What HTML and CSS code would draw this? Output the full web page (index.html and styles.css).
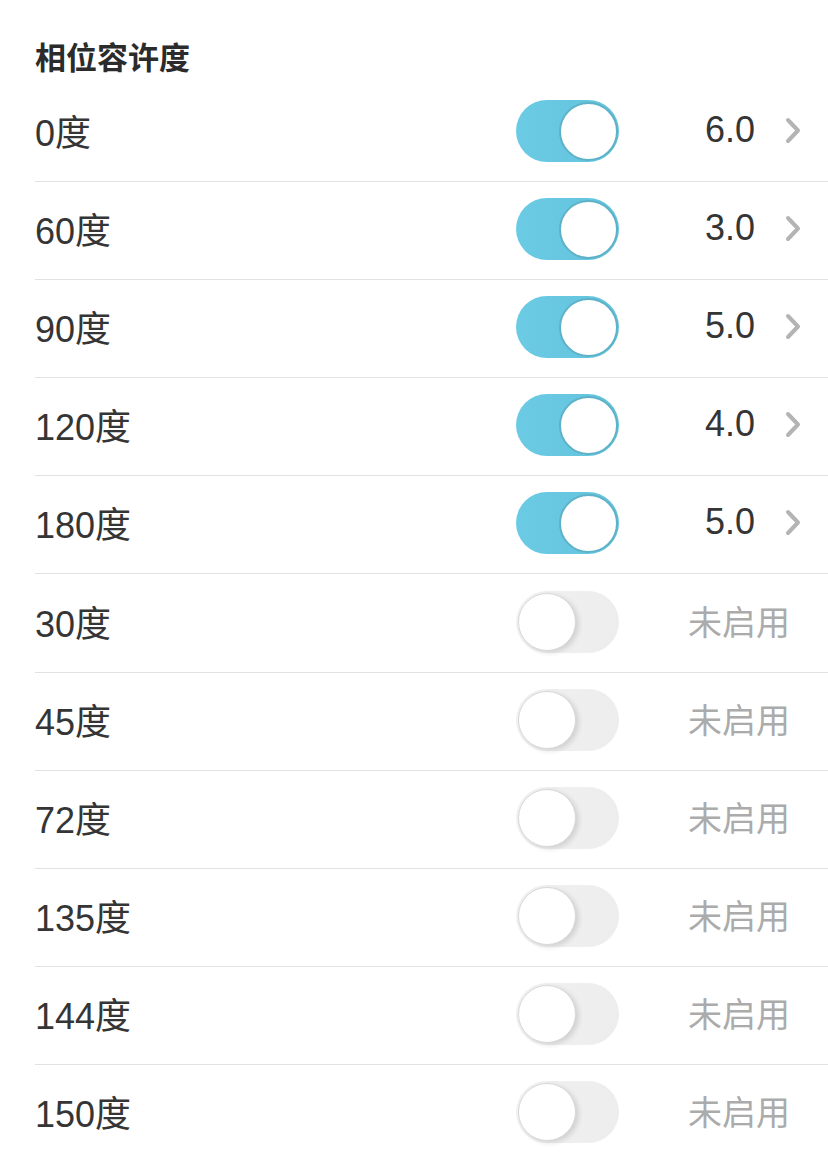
FILE: index.html
```html
<!DOCTYPE html>
<html lang="zh">
<head>
  <meta charset="UTF-8">
  <meta name="viewport" content="width=device-width, initial-scale=1.0">
  <title>相位容许度</title>
  <link rel="stylesheet" href="styles.css">
</head>
<body>
  <div class="panel">
    <h2 class="section-title">相位容许度</h2>
    <ul class="aspect-list">
      <li class="aspect-row">
        <span class="aspect-name">0度</span>
        <span class="switch is-on"><span class="knob"></span></span>
        <span class="aspect-value"><span class="orb">6.0</span><svg class="chevron" viewBox="0 0 16 27"><polyline points="3,3 13,13.5 3,24"/></svg></span>
      </li>
      <li class="aspect-row">
        <span class="aspect-name">60度</span>
        <span class="switch is-on"><span class="knob"></span></span>
        <span class="aspect-value"><span class="orb">3.0</span><svg class="chevron" viewBox="0 0 16 27"><polyline points="3,3 13,13.5 3,24"/></svg></span>
      </li>
      <li class="aspect-row">
        <span class="aspect-name">90度</span>
        <span class="switch is-on"><span class="knob"></span></span>
        <span class="aspect-value"><span class="orb">5.0</span><svg class="chevron" viewBox="0 0 16 27"><polyline points="3,3 13,13.5 3,24"/></svg></span>
      </li>
      <li class="aspect-row">
        <span class="aspect-name">120度</span>
        <span class="switch is-on"><span class="knob"></span></span>
        <span class="aspect-value"><span class="orb">4.0</span><svg class="chevron" viewBox="0 0 16 27"><polyline points="3,3 13,13.5 3,24"/></svg></span>
      </li>
      <li class="aspect-row">
        <span class="aspect-name">180度</span>
        <span class="switch is-on"><span class="knob"></span></span>
        <span class="aspect-value"><span class="orb">5.0</span><svg class="chevron" viewBox="0 0 16 27"><polyline points="3,3 13,13.5 3,24"/></svg></span>
      </li>
      <li class="aspect-row">
        <span class="aspect-name">30度</span>
        <span class="switch"><span class="knob"></span></span>
        <span class="aspect-value"><span class="disabled">未启用</span></span>
      </li>
      <li class="aspect-row">
        <span class="aspect-name">45度</span>
        <span class="switch"><span class="knob"></span></span>
        <span class="aspect-value"><span class="disabled">未启用</span></span>
      </li>
      <li class="aspect-row">
        <span class="aspect-name">72度</span>
        <span class="switch"><span class="knob"></span></span>
        <span class="aspect-value"><span class="disabled">未启用</span></span>
      </li>
      <li class="aspect-row">
        <span class="aspect-name">135度</span>
        <span class="switch"><span class="knob"></span></span>
        <span class="aspect-value"><span class="disabled">未启用</span></span>
      </li>
      <li class="aspect-row">
        <span class="aspect-name">144度</span>
        <span class="switch"><span class="knob"></span></span>
        <span class="aspect-value"><span class="disabled">未启用</span></span>
      </li>
      <li class="aspect-row">
        <span class="aspect-name">150度</span>
        <span class="switch"><span class="knob"></span></span>
        <span class="aspect-value"><span class="disabled">未启用</span></span>
      </li>
    </ul>
  </div>
</body>
</html>
```
FILE: styles.css
```css
/* Settings list */
body {
  margin: 0;
  background-color: #fff;
  color: #333;
  font-family: "Liberation Sans", "Noto Sans CJK SC", sans-serif;
}
.panel {
  padding-left: 35px;
}
.section-title {
  margin: 0;
  padding-top: 41px;
  height: 43px;
  font-size: 31px;
  line-height: 36px;
  font-weight: bold;
  color: #2b2b2b;
}
.aspect-list {
  list-style: none;
  margin: 0;
  padding: 0;
}
.aspect-row {
  display: grid;
  grid-template-columns: 1fr 103px 209px;
  align-items: center;
  height: 97.1px;
  border-bottom: 1px solid #e2e2e2;
  font-size: 36px;
}
.aspect-name {
  margin-bottom: 5px;
  color: #353535;
}
.switch {
  display: flex;
  align-items: center;
  box-sizing: border-box;
  height: 62px;
  padding: 0 2px;
  border-radius: 31px;
  background: linear-gradient(to right, #f1f1f1, #ededed);
  margin-top: -3px;
}
.switch .knob {
  box-sizing: border-box;
  width: 58px;
  height: 58px;
  border-radius: 50%;
  background-color: #fff;
  border: 1px solid #d8d8d8;
  box-shadow: 3px 2px 5px rgba(0, 0, 0, 0.12);
}
.switch.is-on {
  justify-content: flex-end;
  padding: 0 1px;
  background: linear-gradient(to right, #6bcae4, #63c2dc);
}
.switch.is-on .knob {
  width: 59px;
  height: 59px;
  border: 2px solid #5eb2c7;
  box-shadow: none;
}
.aspect-value {
  display: flex;
  justify-content: flex-end;
  align-items: center;
  margin-bottom: 5px;
  padding-right: 27px;
}
.orb {
  color: #353535;
}
.chevron {
  width: 16px;
  height: 27px;
  margin-left: 30px;
  fill: none;
  stroke: #b4b4b4;
  stroke-width: 4;
  stroke-linecap: round;
  stroke-linejoin: round;
}
.disabled {
  padding-right: 11px;
  color: #ababab;
  font-size: 34px;
}
```
